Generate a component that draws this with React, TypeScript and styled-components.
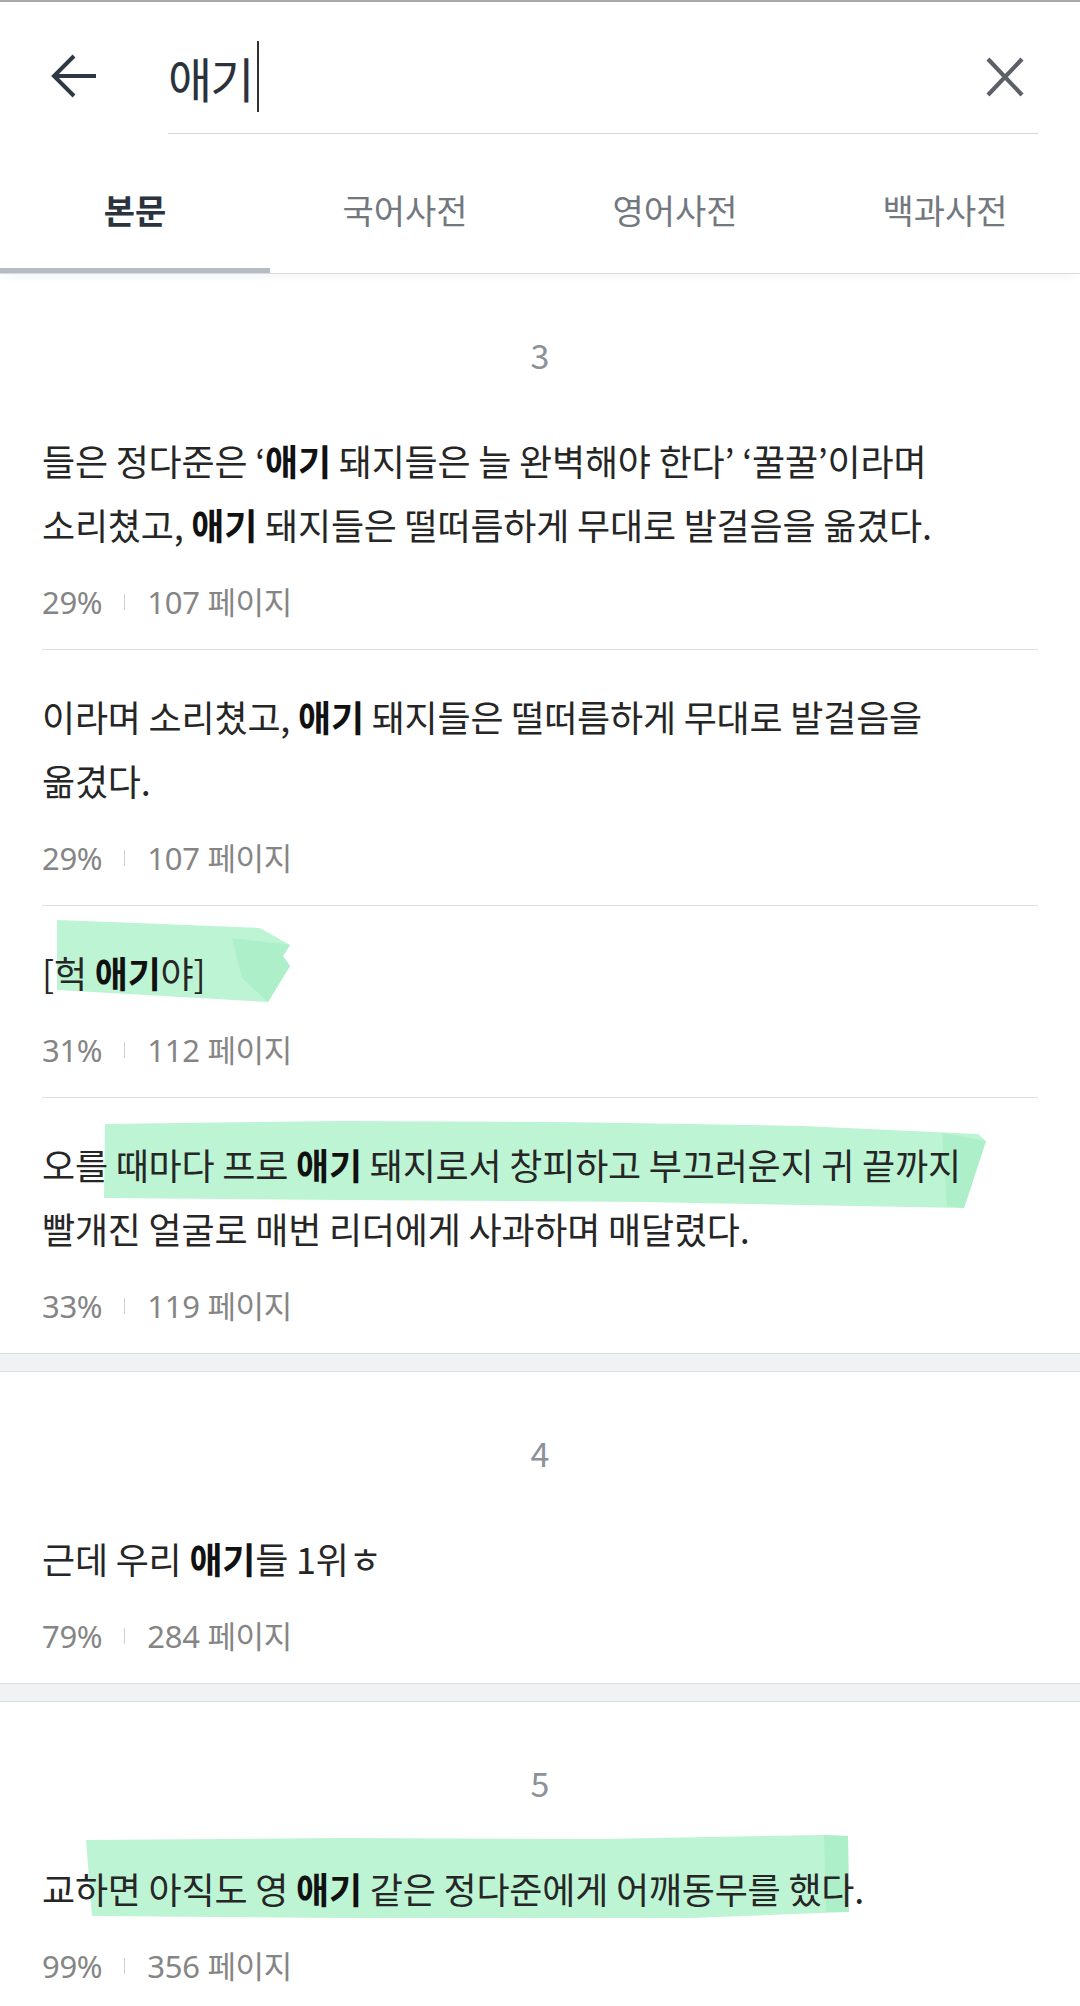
import React from "react";
import styled, { createGlobalStyle } from "styled-components";

const GlobalStyle = createGlobalStyle`
  html, body { margin: 0; padding: 0; background: #fff; }
  body { font-family: "Noto Sans CJK KR", "Noto Sans", sans-serif; -webkit-font-smoothing: antialiased; }
  * { box-sizing: border-box; }
`;

const Page = styled.div`
  width: 1080px;
  min-height: 2006px;
  background: #fff;
  overflow: hidden;
`;

const Header = styled.header`
  display: flex;
  height: 134px;
  border-top: 2px solid #a9a9a9;
`;

const BackButton = styled.button`
  width: 168px;
  padding: 18px 0 0 50px;
  border: 0;
  background: none;
  display: flex;
  align-items: center;
`;

const SearchField = styled.div`
  flex: 1;
  margin-right: 42px;
  padding-top: 18px;
  border-bottom: 1px solid #d6d6d6;
  display: flex;
  align-items: center;
  justify-content: space-between;
`;

const Query = styled.div`
  display: flex;
  align-items: center;
  font-size: 48px;
  letter-spacing: -2px;
  color: #2b323c;
`;

const Caret = styled.span`
  display: block;
  width: 2px;
  height: 71px;
  margin-left: 5px;
  background: #2f2f2f;
`;

const CloseButton = styled.button`
  border: 0;
  background: none;
  padding: 0;
  margin-right: 14px;
  display: flex;
`;

const TabBar = styled.nav`
  position: relative;
  z-index: 1;
  display: grid;
  grid-template-columns: repeat(4, 1fr);
  border-bottom: 1px solid #d9dcdf;
  box-shadow: 0 8px 10px -6px rgba(0, 0, 0, 0.05);
  background: #fff;
`;

const Tab = styled.div`
  display: flex;
  flex-direction: column;
  height: 139px;
`;

const TabLabel = styled.span<{ $active: boolean }>`
  flex: 1;
  display: flex;
  align-items: center;
  justify-content: center;
  padding-top: 17px;
  font-size: 34px;
  letter-spacing: 0;
  font-weight: ${(p) => (p.$active ? 700 : 400)};
  color: ${(p) => (p.$active ? "#2b333e" : "#73787f")};
`;

const TabIndicator = styled.span<{ $active: boolean }>`
  height: 5px;
  background: ${(p) => (p.$active ? "#b5bcc3" : "transparent")};
`;

const Section = styled.section`
  padding: 61px 42px 0;
`;

const SectionNumber = styled.div`
  text-align: center;
  font-size: 34px;
  line-height: 40px;
  color: #8c929a;
  margin-bottom: 19px;
`;

const Item = styled.article<{ $last: boolean }>`
  padding: 34px 0 27px;
  border-bottom: ${(p) => (p.$last ? "none" : "1px solid #dfe1e3")};
`;

const Passage = styled.p`
  position: relative;
  isolation: isolate;
  margin: 0;
  font-size: 36px;
  line-height: 64px;
  letter-spacing: -0.2px;
  color: #262626;
`;

const Line = styled.span`
  display: block;
  white-space: nowrap;
`;

const Keyword = styled.b`
  font-weight: 700;
  color: #111;
`;

const Marker = styled.svg`
  position: absolute;
  left: 0;
  top: 0;
  z-index: -1;
  overflow: visible;
  pointer-events: none;
`;

const Meta = styled.div`
  display: flex;
  align-items: center;
  margin-top: 26px;
  font-family: "Noto Sans", "Noto Sans CJK KR", sans-serif;
  font-size: 31px;
  letter-spacing: -0.3px;
  line-height: 40px;
  color: #858585;
`;

const MetaDivider = styled.span`
  width: 1px;
  height: 16px;
  margin: 0 22px;
  background: #d0d0d0;
`;

const SectionGap = styled.div`
  height: 19px;
  background: #f1f2f4;
  border-top: 1px solid #dcdfe2;
  border-bottom: 1px solid #dcdfe2;
`;

type Entry = {
  lines: string[];
  percent: string;
  page: string;
  marker?: { main: string; shade?: string };
};

type Group = { number: number; entries: Entry[] };

const groups: Group[] = [
  {
    number: 3,
    entries: [
      {
        lines: [
          "들은 정다준은 ‘**애기** 돼지들은 늘 완벽해야 한다’ ‘꿀꿀’이라며",
          "소리쳤고, **애기** 돼지들은 떨떠름하게 무대로 발걸음을 옮겼다.",
        ],
        percent: "29%",
        page: "107 페이지",
      },
      {
        lines: [
          "이라며 소리쳤고, **애기** 돼지들은 떨떠름하게 무대로 발걸음을",
          "옮겼다.",
        ],
        percent: "29%",
        page: "107 페이지",
      },
      {
        lines: ["[헉 **애기**야]"],
        percent: "31%",
        page: "112 페이지",
        marker: {
          main: "15,-20 120,-16 218,-12 248,5 241,16 248,26 226,62 15,50",
          shade: "190,-2 248,5 241,16 248,26 226,62 200,38",
        },
      },
      {
        lines: [
          "오를 때마다 프로 **애기** 돼지로서 창피하고 부끄러운지 귀 끝까지",
          "빨개진 얼굴로 매번 리더에게 사과하며 매달렸다.",
        ],
        percent: "33%",
        page: "119 페이지",
        marker: {
          main: "63,-8 300,-11 520,-10 760,-6 936,2 944,9 922,76 600,70 300,68 62,66",
          shade: "900,1 944,9 922,76 905,74",
        },
      },
    ],
  },
  {
    number: 4,
    entries: [
      {
        lines: ["근데 우리 **애기**들 1위ㅎ"],
        percent: "79%",
        page: "284 페이지",
      },
    ],
  },
  {
    number: 5,
    entries: [
      {
        lines: ["교하면 아직도 영 **애기** 같은 정다준에게 어깨동무를 했다."],
        percent: "99%",
        page: "356 페이지",
        marker: {
          main: "44,-16 300,-18 560,-17 782,-21 806,-20 807,56 650,62 300,62 50,60",
          shade: "782,-21 806,-20 807,56 784,56",
        },
      },
    ],
  },
];

const tabs = ["본문", "국어사전", "영어사전", "백과사전"];

function renderLine(text: string) {
  return text.split("**").map((part, i) =>
    i % 2 === 1 ? <Keyword key={i}>{part}</Keyword> : <React.Fragment key={i}>{part}</React.Fragment>
  );
}

export default function App() {
  return (
    <Page>
      <GlobalStyle />
      <Header>
        <BackButton aria-label="뒤로">
          <svg width="48" height="46" viewBox="0 0 48 46" fill="none">
            <path d="M46 22H5" stroke="#2e3744" strokeWidth="4" strokeLinecap="butt" />
            <path d="M24 2L4 22L24 42" stroke="#2e3744" strokeWidth="4" strokeLinejoin="miter" />
          </svg>
        </BackButton>
        <SearchField>
          <Query>
            애기
            <Caret />
          </Query>
          <CloseButton aria-label="지우기">
            <svg width="38" height="40" viewBox="0 0 38 40" fill="none">
              <path d="M2 2L36 38M36 2L2 38" stroke="#5d6167" strokeWidth="4.2" />
            </svg>
          </CloseButton>
        </SearchField>
      </Header>
      <TabBar>
        {tabs.map((t, i) => (
          <Tab key={t}>
            <TabLabel $active={i === 0}>{t}</TabLabel>
            <TabIndicator $active={i === 0} />
          </Tab>
        ))}
      </TabBar>
      {groups.map((g, gi) => (
        <React.Fragment key={g.number}>
          {gi > 0 && <SectionGap />}
          <Section>
            <SectionNumber>{g.number}</SectionNumber>
            {g.entries.map((e, ei) => (
              <Item key={ei} $last={ei === g.entries.length - 1}>
                <Passage>
                  {e.marker && (
                    <Marker width="1" height="1">
                      <polygon points={e.marker.main} fill="#bdf4d4" />
                      {e.marker.shade && <polygon points={e.marker.shade} fill="#a9edc5" opacity="0.8" />}
                    </Marker>
                  )}
                  {e.lines.map((l, li) => (
                    <Line key={li}>{renderLine(l)}</Line>
                  ))}
                </Passage>
                <Meta>
                  <span>{e.percent}</span>
                  <MetaDivider />
                  <span>{e.page}</span>
                </Meta>
              </Item>
            ))}
          </Section>
        </React.Fragment>
      ))}
    </Page>
  );
}
